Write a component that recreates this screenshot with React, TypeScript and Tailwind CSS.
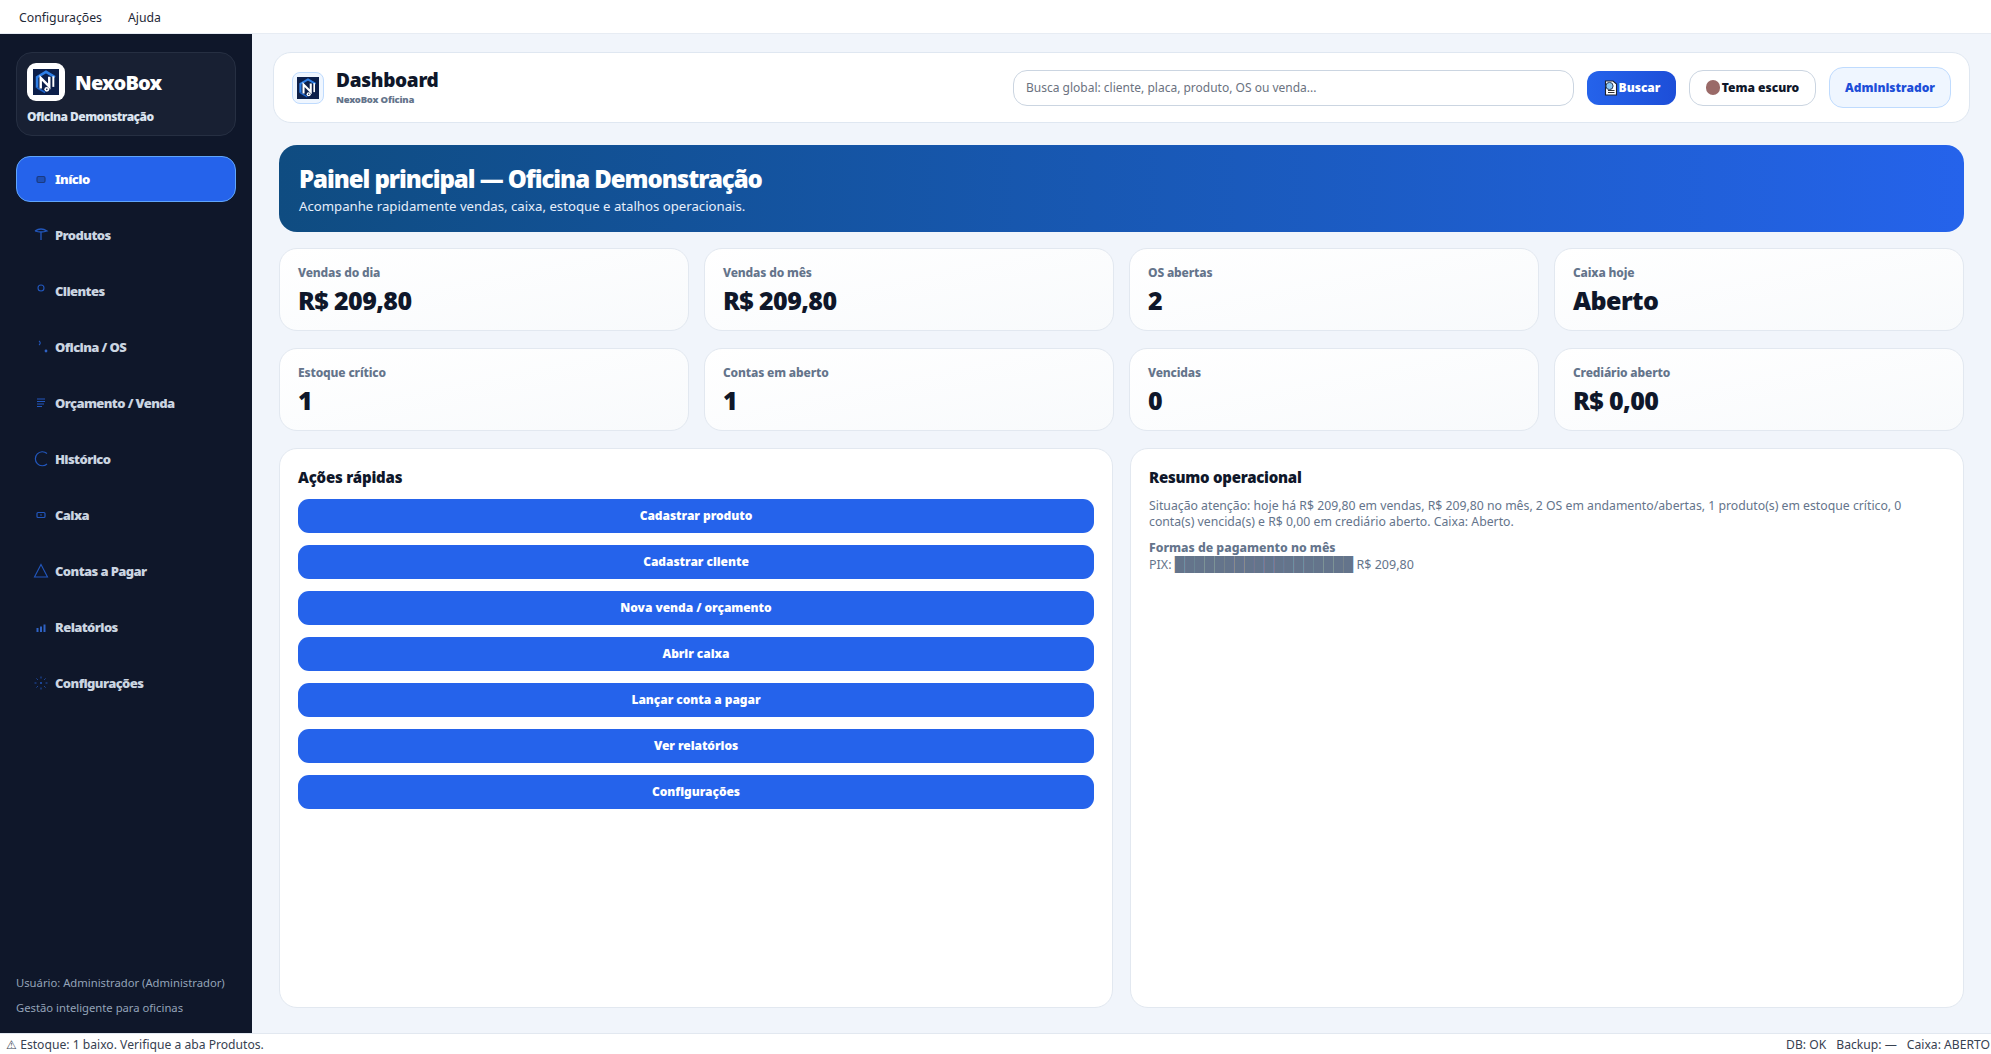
const font = "[font-family:'Noto_Sans',sans-serif]";

function Logo({ size }: { size: number }) {
  return (
    <svg width={size} height={size} viewBox="0 0 32 32">
      <rect width="32" height="32" fill="#0c1f4a" />
      <path d="M5 23 V10 L16 3.5 L27 10" fill="none" stroke="#2f7fe6" strokeWidth="3.2" />
      <path d="M5 23 L15 29" fill="none" stroke="#1f63c8" strokeWidth="2" />
      <path d="M9.5 24 V11 L20 21.5 V9.5" fill="none" stroke="#ffffff" strokeWidth="3" />
      <path d="M25 9 V22" stroke="#ffffff" strokeWidth="2.4" />
      <circle cx="17" cy="25" r="3" fill="#ffffff" />
      <circle cx="17" cy="25" r="1" fill="#0c1f4a" />
    </svg>
  );
}

const stroke = "#2257bd";
const icons: Record<string, React.ReactNode> = {
  inicio: <rect x="6" y="7.5" width="8" height="6" rx="1.5" fill="#1e50b8" stroke="#1a3a80" strokeWidth="1.2" />,
  produtos: <path d="M4 6 Q10 2 16 6 Q10 8 4 6 M10 7 V15" fill="none" stroke={stroke} strokeWidth="1.3" />,
  clientes: <circle cx="10" cy="7" r="3" fill="none" stroke={stroke} strokeWidth="1.1" />,
  oficina: <><path d="M8 4 Q10.5 6 8 8" fill="none" stroke={stroke} strokeWidth="1.1" /><circle cx="15" cy="14" r="1.4" fill="#2f62c4" /></>,
  orcamento: <path d="M6 6 H14 M6 8.5 H14 M6 11 H13 M6 13.5 H11" stroke={stroke} strokeWidth="1.1" />,
  historico: <path d="M16 4.5 A7 7 0 1 0 16 15" fill="none" stroke={stroke} strokeWidth="1.2" />,
  caixa: <><rect x="6" y="7.5" width="8" height="5" rx="1" fill="none" stroke={stroke} strokeWidth="1.2" /><circle cx="10" cy="10" r="0.8" fill={stroke} /></>,
  contas: <path d="M10 3.5 L16.5 16 H3.5 Z" fill="none" stroke={stroke} strokeWidth="1.1" />,
  relatorios: <path d="M6.5 11 V15 M10 9.5 V15 M13.5 7.5 V15" stroke="#2f62c4" strokeWidth="2" />,
  config: <><circle cx="10" cy="10" r="1" fill={stroke} /><path d="M10 3.5 V5.5 M10 14.5 V16.5 M3.5 10 H5.5 M14.5 10 H16.5 M5.5 5.5 L6.8 6.8 M13.2 13.2 L14.5 14.5 M14.5 5.5 L13.2 6.8 M6.8 13.2 L5.5 14.5" stroke={stroke} strokeWidth="0.9" /></>,
};

const nav = [
  ["Início", "inicio"],
  ["Produtos", "produtos"],
  ["Clientes", "clientes"],
  ["Oficina / OS", "oficina"],
  ["Orçamento / Venda", "orcamento"],
  ["Histórico", "historico"],
  ["Caixa", "caixa"],
  ["Contas a Pagar", "contas"],
  ["Relatórios", "relatorios"],
  ["Configurações", "config"],
];

const stats = [
  ["Vendas do dia", "R$ 209,80"],
  ["Vendas do mês", "R$ 209,80"],
  ["OS abertas", "2"],
  ["Caixa hoje", "Aberto"],
  ["Estoque crítico", "1"],
  ["Contas em aberto", "1"],
  ["Vencidas", "0"],
  ["Crediário aberto", "R$ 0,00"],
];

const actions = [
  "Cadastrar produto",
  "Cadastrar cliente",
  "Nova venda / orçamento",
  "Abrir caixa",
  "Lançar conta a pagar",
  "Ver relatórios",
  "Configurações",
];

export default function App() {
  return (
    <div className={`${font} flex h-[1054px] w-[1991px] flex-col overflow-hidden bg-[#f1f5fb] text-[#0f172a]`}>
      <div className="flex h-[34px] shrink-0 items-center gap-[26px] border-b border-[#e7ecf3] bg-white pl-[19px] pt-[3px] text-[12.25px] text-[#1f2937]">
        <span>Configurações</span>
        <span>Ajuda</span>
      </div>

      <div className="flex min-h-0 flex-1">
        <aside className="flex w-[252px] shrink-0 flex-col bg-[#0f172a] px-[16px] pb-[13px] pt-[18px]">
          <div className="h-[84px] rounded-[16px] border border-[#262f42] bg-[#182033] pl-[10px] pt-[10px]">
            <div className="flex items-center gap-[10px]">
              <div className="flex h-[38px] w-[38px] items-center justify-center rounded-[9px] bg-white">
                <Logo size={26} />
              </div>
              <span className="pt-[1px] text-[20px] font-black leading-none tracking-[-0.8px] text-white">NexoBox</span>
            </div>
            <div className="mt-[7px] text-[12px] font-black leading-[18px] tracking-[-0.55px] text-[#dbe4f0]">Oficina Demonstração</div>
          </div>

          <nav className="mt-[20px] flex flex-col">
            {nav.map(([label, key], i) => (
              <div
                key={label}
                className={
                  i === 0
                    ? "mb-[10px] flex h-[46px] items-center gap-[3px] rounded-[14px] border border-[#60a5fa] bg-[#2563eb] pl-[14px] text-[13px] font-black tracking-[-0.6px] text-white"
                    : "mb-[10px] flex h-[46px] items-center gap-[3px] pl-[15px] text-[13px] font-black tracking-[-0.6px] text-[#cbd5e1]"
                }
              >
                <svg width="20" height="20" viewBox="0 0 20 20" className="shrink-0">{icons[key]}</svg>
                <span className="ml-[1px] pt-[1px]">{label}</span>
              </div>
            ))}
          </nav>

          <div className="mt-auto whitespace-nowrap text-[11.25px] leading-[25px] text-[#94a3b8]">
            <div>Usuário: Administrador (Administrador)</div>
            <div>Gestão inteligente para oficinas</div>
          </div>
        </aside>

        <main className="flex min-w-0 flex-1 flex-col px-[21px] pt-[18px]">
          <header className="flex h-[71px] shrink-0 items-center rounded-[18px] border border-[#dfe7f1] bg-white pl-[18px] pr-[18px]">
            <div className="flex h-[32px] w-[32px] items-center justify-center rounded-[8px] border border-[#bfdbfe] bg-[#eff6ff]">
              <Logo size={22} />
            </div>
            <div className="ml-[12px]">
              <div className="text-[19px] font-black leading-[22px] tracking-[-0.3px] text-[#0f172a]">Dashboard</div>
              <div className="mt-[3px] text-[9.5px] font-black leading-[12px] tracking-[-0.2px] text-[#64748b]">NexoBox Oficina</div>
            </div>
            <div className="ml-auto flex h-[36px] w-[561px] items-center rounded-[14px] border border-[#cbd5e1] bg-white pl-[12px] text-[12px] text-[#6b7280]">
              Busca global: cliente, placa, produto, OS ou venda...
            </div>
            <div className="ml-[13px] flex h-[34px] w-[89px] items-center justify-center rounded-[12px] bg-gradient-to-r from-[#2563eb] to-[#1d4ed8] text-[12px] font-black text-white">
              <svg width="16" height="18" viewBox="0 0 16 18">
                <path d="M2.5 2 H10 L13.5 5 V16 H2.5 Z" fill="#fff" stroke="#1a2233" strokeWidth="1.1" />
                <path d="M5 11.5 H11.5 M5 13.5 H11.5" stroke="#333" strokeWidth="1" />
                <circle cx="6.5" cy="7" r="3.6" fill="#8cc8f5" stroke="#2a3a55" strokeWidth="1" />
              </svg>
              <span>Buscar</span>
            </div>
            <div className="ml-[13px] flex h-[36px] w-[127px] items-center justify-center gap-[2px] rounded-[14px] border border-[#cbd5e1] bg-white text-[12px] font-black text-[#0f172a]">
              <span className="h-[15px] w-[14px] rounded-full bg-[#9a6a68]" />
              <span>Tema escuro</span>
            </div>
            <div className="ml-[13px] flex h-[41px] w-[122px] items-center justify-center rounded-[14px] border border-[#bfdbfe] bg-[#eff6ff] text-[12px] font-black text-[#1d4ed8]">
              Administrador
            </div>
          </header>

          <div className="flex min-h-0 flex-1 flex-col px-[6px] pb-[25px] pt-[22px]">
            <section className="h-[87px] shrink-0 rounded-[18px] bg-gradient-to-r from-[#0f4c81] to-[#2563eb] pl-[20px] pt-[18px] text-white">
              <div className="text-[24px] font-black leading-[32px] tracking-[-1.05px]">Painel principal — Oficina Demonstração</div>
              <div className="mt-[2px] text-[13.2px] leading-[18px] text-[#e6eefb]">Acompanhe rapidamente vendas, caixa, estoque e atalhos operacionais.</div>
            </section>

            <div className="mt-[16px] grid shrink-0 grid-cols-4 gap-x-[15px] gap-y-[17px]">
              {stats.map(([label, value]) => (
                <div key={label} className="h-[83px] rounded-[18px] border border-[#e2e8f0] bg-gradient-to-br from-white to-[#f8fafc] pl-[18px] pt-[15px]">
                  <div className="text-[12px] font-extrabold leading-[18px] tracking-[-0.15px] text-[#64748b]">{label}</div>
                  <div className="mt-[3px] text-[25px] font-black leading-[30px] tracking-[-0.6px] text-[#0f172a]">{value}</div>
                </div>
              ))}
            </div>

            <div className="mt-[17px] grid min-h-0 flex-1 grid-cols-2 gap-[17px]">
              <section className="rounded-[18px] border border-[#e2e8f0] bg-white px-[18px] pt-[17px]">
                <h2 className="text-[15px] font-black leading-[22px] tracking-[-0.2px] text-[#0f172a]">Ações rápidas</h2>
                <div className="mt-[11px] flex flex-col gap-[12px]">
                  {actions.map((a) => (
                    <div key={a} className="flex h-[34px] items-center justify-center rounded-[11px] bg-[#2563eb] text-[12px] font-black tracking-[-0.05px] text-white">{a}</div>
                  ))}
                </div>
              </section>
              <section className="rounded-[18px] border border-[#e2e8f0] bg-white px-[18px] pt-[17px]">
                <h2 className="text-[15px] font-black leading-[22px] tracking-[-0.25px] text-[#0f172a]">Resumo operacional</h2>
                <p className="mt-[10px] text-[12.25px] leading-[16px] text-[#64748b]">
                  Situação atenção: hoje há R$ 209,80 em vendas, R$ 209,80 no mês, 2 OS em andamento/abertas, 1 produto(s) em estoque crítico, 0 conta(s) vencida(s) e R$ 0,00 em crediário aberto. Caixa: Aberto.
                </p>
                <div className="mt-[10px] text-[12.25px] font-extrabold leading-[16px] text-[#64748b]">Formas de pagamento no mês</div>
                <div className="text-[12.5px] leading-[16px] text-[#64748b]">PIX: <span className="text-[14px]">██████████████████</span> R$ 209,80</div>
              </section>
            </div>
          </div>
        </main>
      </div>

      <footer className="flex h-[21px] shrink-0 items-center justify-between border-t border-[#e2e8f0] bg-white pl-[6px] pr-[1px] pt-[2px] text-[12.15px] text-[#374151]">
        <span>⚠ Estoque: 1 baixo. Verifique a aba Produtos.</span>
        <span className="flex gap-[10px]"><span>DB: OK</span><span>Backup: —</span><span>Caixa: ABERTO</span></span>
      </footer>
    </div>
  );
}
